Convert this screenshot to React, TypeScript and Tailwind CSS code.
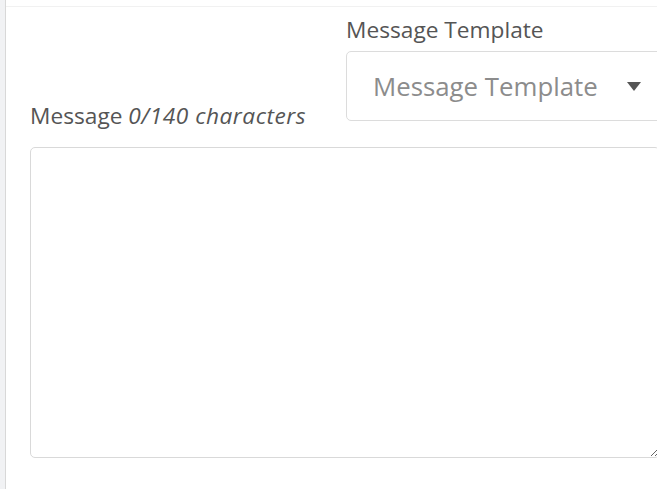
import React from "react";

export default function App() {
  return (
    <div className="w-[657px] h-[489px] overflow-hidden bg-white flex font-['Open_Sans',sans-serif]">
      <div className="w-[6px] shrink-0 bg-[#f1f2f4] border-r border-[#d8d8d8]" />
      <div className="flex-1 pt-[6px] min-w-0">
        <div className="border-t border-[#f1f1f1] pl-[24px]">
          <div className="flex items-start">
            <div className="w-[316px] shrink-0 pt-[94px]">
              <label className="block text-[22.7px] leading-[30px] text-[#555555] whitespace-nowrap">
                Message <span className="italic tracking-[0.5px]">0/140 characters</span>
              </label>
            </div>
            <div className="w-[320px] shrink-0 pt-[8px]">
              <label className="block text-[22.7px] leading-[30px] text-[#555555] whitespace-nowrap">
                Message Template
              </label>
              <div className="mt-[6px] h-[70px] border border-[#dcdcdc] rounded-[5px] flex items-center pl-[26px] pr-[24px]">
                <span className="flex-1 text-[25.8px] leading-[34px] text-[#8c8c8c] whitespace-nowrap">
                  Message Template
                </span>
                <svg width="14" height="9" viewBox="0 0 14 9" className="shrink-0">
                  <polygon points="0,0 14,0 7,9" fill="#555555" />
                </svg>
              </div>
            </div>
          </div>
          <textarea className="mt-[16px] block w-[630px] h-[311px] border border-[#d9d9d9] rounded-[5px] outline-none" />
        </div>
      </div>
    </div>
  );
}
